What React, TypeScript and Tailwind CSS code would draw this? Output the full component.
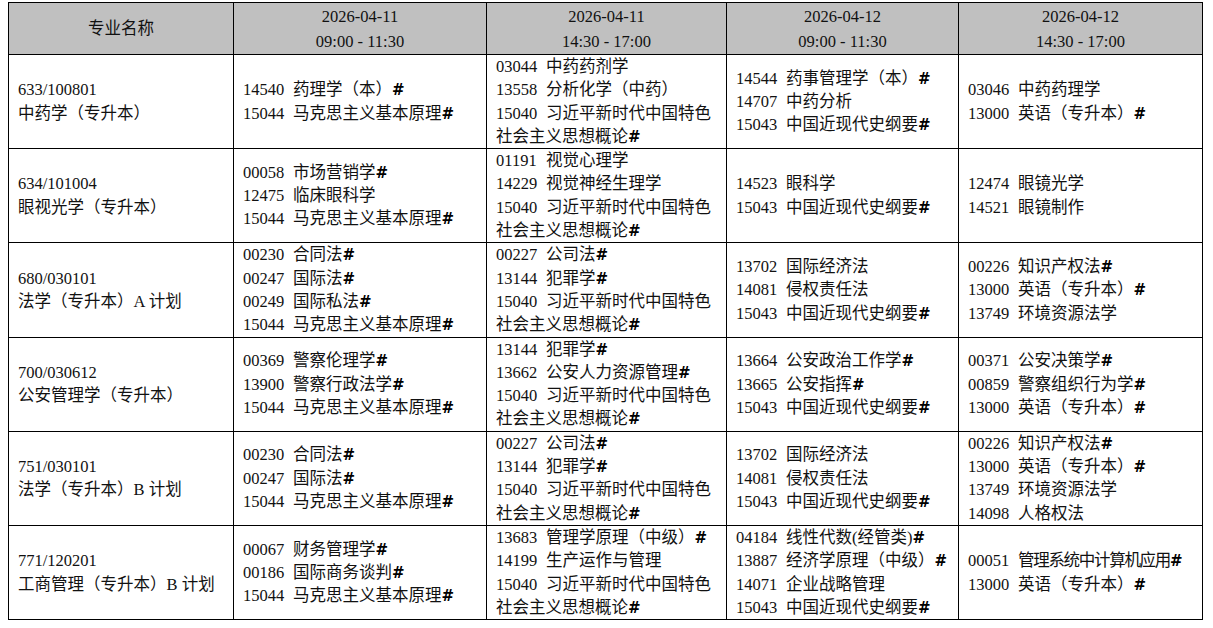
import React from 'react';

type Line = { code: string; name: string; hash?: boolean; wrap?: string; tight?: boolean };

const L = (code: string, name: string, hash = false): Line => ({ code, name, hash });

const xi: Line = { code: '15040', name: '习近平新时代中国特色', wrap: '社会主义思想概论', hash: true };

const headers = [
  { date: '2026-04-11', time: '09:00 - 11:30' },
  { date: '2026-04-11', time: '14:30 - 17:00' },
  { date: '2026-04-12', time: '09:00 - 11:30' },
  { date: '2026-04-12', time: '14:30 - 17:00' },
];

const rows: { id: string; major: string; cells: Line[][] }[] = [
  {
    id: '633/100801',
    major: '中药学（专升本）',
    cells: [
      [L('14540', '药理学（本）', true), L('15044', '马克思主义基本原理', true)],
      [L('03044', '中药药剂学'), L('13558', '分析化学（中药）'), xi],
      [L('14544', '药事管理学（本）', true), L('14707', '中药分析'), L('15043', '中国近现代史纲要', true)],
      [L('03046', '中药药理学'), L('13000', '英语（专升本）', true)],
    ],
  },
  {
    id: '634/101004',
    major: '眼视光学（专升本）',
    cells: [
      [L('00058', '市场营销学', true), L('12475', '临床眼科学'), L('15044', '马克思主义基本原理', true)],
      [L('01191', '视觉心理学'), L('14229', '视觉神经生理学'), xi],
      [L('14523', '眼科学'), L('15043', '中国近现代史纲要', true)],
      [L('12474', '眼镜光学'), L('14521', '眼镜制作')],
    ],
  },
  {
    id: '680/030101',
    major: '法学（专升本）A 计划',
    cells: [
      [L('00230', '合同法', true), L('00247', '国际法', true), L('00249', '国际私法', true), L('15044', '马克思主义基本原理', true)],
      [L('00227', '公司法', true), L('13144', '犯罪学', true), xi],
      [L('13702', '国际经济法'), L('14081', '侵权责任法'), L('15043', '中国近现代史纲要', true)],
      [L('00226', '知识产权法', true), L('13000', '英语（专升本）', true), L('13749', '环境资源法学')],
    ],
  },
  {
    id: '700/030612',
    major: '公安管理学（专升本）',
    cells: [
      [L('00369', '警察伦理学', true), L('13900', '警察行政法学', true), L('15044', '马克思主义基本原理', true)],
      [L('13144', '犯罪学', true), L('13662', '公安人力资源管理', true), xi],
      [L('13664', '公安政治工作学', true), L('13665', '公安指挥', true), L('15043', '中国近现代史纲要', true)],
      [L('00371', '公安决策学', true), L('00859', '警察组织行为学', true), L('13000', '英语（专升本）', true)],
    ],
  },
  {
    id: '751/030101',
    major: '法学（专升本）B 计划',
    cells: [
      [L('00230', '合同法', true), L('00247', '国际法', true), L('15044', '马克思主义基本原理', true)],
      [L('00227', '公司法', true), L('13144', '犯罪学', true), xi],
      [L('13702', '国际经济法'), L('14081', '侵权责任法'), L('15043', '中国近现代史纲要', true)],
      [L('00226', '知识产权法', true), L('13000', '英语（专升本）', true), L('13749', '环境资源法学'), L('14098', '人格权法')],
    ],
  },
  {
    id: '771/120201',
    major: '工商管理（专升本）B 计划',
    cells: [
      [L('00067', '财务管理学', true), L('00186', '国际商务谈判', true), L('15044', '马克思主义基本原理', true)],
      [L('13683', '管理学原理（中级）', true), L('14199', '生产运作与管理'), xi],
      [L('04184', '线性代数(经管类)', true), L('13887', '经济学原理（中级）', true), L('14071', '企业战略管理'), L('15043', '中国近现代史纲要', true)],
      [{ code: '00051', name: '管理系统中计算机应用', hash: true, tight: true }, L('13000', '英语（专升本）', true)],
    ],
  },
];

function Hash() {
  return (
    <span className="font-bold text-[15px] leading-[0px] text-black" style={{ fontFamily: '"DejaVu Sans", sans-serif' }}>
      #
    </span>
  );
}

function CourseLine({ line }: { line: Line }) {
  if (line.wrap) {
    return (
      <>
        <div className="w-[215px] text-justify [text-align-last:justify] whitespace-nowrap">
          <span className="inline-block w-[50px]">{line.code}</span>
          {line.name}
        </div>
        <div className="whitespace-nowrap">
          {line.wrap}
          {line.hash && <Hash />}
        </div>
      </>
    );
  }
  return (
    <div className="whitespace-nowrap">
      <span className="inline-block w-[50px]">{line.code}</span>
      <span className={line.tight ? 'tracking-[-1.3px]' : ''}>{line.name}</span>
      {line.hash && <Hash />}
    </div>
  );
}

export default function App() {
  return (
    <div
      className="min-h-screen bg-white pl-[8px] pt-[2px] text-[#111] text-[16.5px] leading-[23.3px]"
      style={{ fontFamily: '"Liberation Serif", "Noto Sans CJK SC", serif' }}
    >
      <table className="table-fixed border-collapse w-[1194px]">
        <colgroup>
          <col className="w-[225px]" />
          <col className="w-[253px]" />
          <col className="w-[240px]" />
          <col className="w-[232px]" />
          <col className="w-[244px]" />
        </colgroup>
        <thead>
          <tr className="bg-[#c0c0c0]">
            <th className="h-[52px] border-[1.5px] border-black font-normal text-center align-middle">专业名称</th>
            {headers.map((h, i) => (
              <th key={i} className="h-[52px] border-[1.5px] border-black font-normal text-center align-middle leading-[25px]">
                <div>{h.date}</div>
                <div>{h.time}</div>
              </th>
            ))}
          </tr>
        </thead>
        <tbody>
          {rows.map((r) => (
            <tr key={r.id}>
              <td className="h-[93px] border-[1.5px] border-black pl-[9px] py-0 align-middle">
                <div>{r.id}</div>
                <div>{r.major}</div>
              </td>
              {r.cells.map((c, i) => (
                <td key={i} className="h-[93px] border-[1.5px] border-black pl-[9px] pr-0 py-0 align-middle">
                  {c.map((line, j) => (
                    <CourseLine key={j} line={line} />
                  ))}
                </td>
              ))}
            </tr>
          ))}
        </tbody>
      </table>
    </div>
  );
}
